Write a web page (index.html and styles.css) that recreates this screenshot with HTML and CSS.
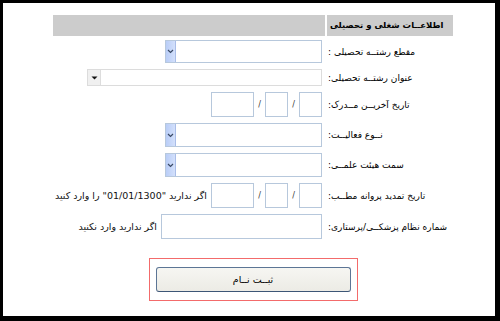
FILE: index.html
```html
<!DOCTYPE html>
<html lang="fa" dir="rtl">
	<head>
		<meta charset="UTF-8" />
		<meta name="viewport" content="width=device-width, initial-scale=1.0" />
		<title>اطلاعات شغلی و تحصیلی</title>

		<link rel="stylesheet" href="styles.css">
	</head>
	<body>
		<div class="frame">
			<form class="form">
				<div class="row head">
					<div class="label">اطلاعــات شغلی و تحصیلی</div>
					<div class="field"></div>
				</div>

				<div class="row">
					<div class="label">مقطع رشتــه تحصیلی :</div>
					<div class="field">
						<span class="combo blue w157 h23">
							<select></select>
							<span class="drop"><svg width="7" height="5" viewBox="0 0 7 5"><path d="M1 1l2.5 2.5L6 1" fill="none" stroke="#3a4a66" stroke-width="1.2"/></svg></span>
						</span>
					</div>
				</div>

				<div class="row">
					<div class="label">عنوان رشتــه تحصیلی:</div>
					<div class="field">
						<span class="combo gray w235 h17">
							<select></select>
							<span class="drop"><svg width="7" height="4" viewBox="0 0 7 4"><path d="M0.5 0.5h6L3.5 3.5z" fill="#111"/></svg></span>
						</span>
					</div>
				</div>

				<div class="row">
					<div class="label">تاریخ آخریــن مــدرک:</div>
					<div class="field date">
						<input class="box day" type="text" />
						<span class="slash">/</span>
						<input class="box day" type="text" />
						<span class="slash">/</span>
						<input class="box year" type="text" />
					</div>
				</div>

				<div class="row">
					<div class="label">نــوع فعالیــت:</div>
					<div class="field">
						<span class="combo blue w157 h24">
							<select></select>
							<span class="drop"><svg width="7" height="5" viewBox="0 0 7 5"><path d="M1 1l2.5 2.5L6 1" fill="none" stroke="#3a4a66" stroke-width="1.2"/></svg></span>
						</span>
					</div>
				</div>

				<div class="row">
					<div class="label">سمت هیئت علمــی:</div>
					<div class="field">
						<span class="combo blue w157 h24">
							<select></select>
							<span class="drop"><svg width="7" height="5" viewBox="0 0 7 5"><path d="M1 1l2.5 2.5L6 1" fill="none" stroke="#3a4a66" stroke-width="1.2"/></svg></span>
						</span>
					</div>
				</div>

				<div class="row">
					<div class="label">تاریخ تمدید پروانه مطــب:</div>
					<div class="field date">
						<input class="box day" type="text" />
						<span class="slash">/</span>
						<input class="box day" type="text" />
						<span class="slash">/</span>
						<input class="box year" type="text" />
						<span class="hint">اگر ندارید "01/01/1300" را وارد کنید</span>
					</div>
				</div>

				<div class="row">
					<div class="label">شماره نظام پزشکــی/پرستاری:</div>
					<div class="field">
						<input class="box wide" type="text" />
						<span class="hint">اگر ندارید وارد نکنید</span>
					</div>
				</div>

				<div class="submit">
					<div class="outline">
						<button type="button" class="btn">ثبــت نــام</button>
					</div>
				</div>
			</form>
		</div>
	</body>
</html>
```

FILE: styles.css
```css
* {
	padding: 0;
	margin: 0;
	box-sizing: border-box;
}

body {
	background: #fff;
	font-family: "DejaVu Sans", "Noto Sans", sans-serif;
	font-size: 9px;
	color: #000;
}

.frame {
	width: 500px;
	height: 321px;
	border-style: solid;
	border-color: #000;
	border-width: 3px 5px 5px 3px;
	background: #fff;
	overflow: hidden;
}

.form {
	width: 400px;
	margin: 12px auto 0 50px;
}

.row {
	display: grid;
	grid-template-columns: 126px 272px;
	column-gap: 2px;
	align-items: center;
	padding: 3px 0;
}
.row.head {
	padding: 0;
	height: 21px;
	margin-bottom: 1px;
}
.row.head > div {
	height: 21px;
	background: #cccccc;
}
.row.head .label {
	font-weight: bold;
	font-size: 8.5px;
	line-height: 21px;
	padding-left: 3px;
}

.label {
	text-align: left;
	padding-left: 1px;
	white-space: nowrap;
	overflow: hidden;
}

.field {
	display: flex;
	align-items: center;
	padding-right: 3px;
}

.combo {
	position: relative;
	display: inline-block;
	flex-shrink: 0;
}
.combo select {
	appearance: none;
	-webkit-appearance: none;
	display: block;
	width: 100%;
	height: 100%;
	background: #fff;
	border: 1px solid #b7c8dc;
	outline: none;
}
.combo.gray select {
	border-color: #dcdcdc;
}
.combo .drop {
	position: absolute;
	left: 1px;
	top: 1px;
	bottom: 1px;
	width: 10px;
	display: flex;
	align-items: center;
	justify-content: center;
}
.combo.blue .drop {
	background: linear-gradient(to right, #b9cdf7, #d3e0fb);
	border-right: 1px solid #a9bde8;
}
.combo.gray .drop {
	width: 13px;
	background: #f0f0f0;
	border-right: 1px solid #dddddd;
}

.w157 { width: 157px; }
.w235 { width: 235px; }
.h23 { height: 23px; }
.h17 { height: 17px; }
.h24 { height: 24px; }

.box {
	display: block;
	flex-shrink: 0;
	height: 25px;
	border: 1px solid #b7c8dc;
	background: #fff;
	outline: none;
}
.box.day {
	width: 23px;
}
.box.year {
	width: 43px;
}
.box.wide {
	width: 161px;
}

.slash {
	flex-shrink: 0;
	width: 11px;
	text-align: center;
	font-size: 8px;
	color: #333;
}

.hint {
	margin-right: 4px;
	white-space: nowrap;
	font-size: 9.5px;
	color: #111;
}

.submit {
	display: flex;
	justify-content: center;
	margin-top: 16px;
}
.outline {
	border: 1px solid #f36b6b;
	padding: 8px 6px;
}
.btn {
	display: block;
	width: 195px;
	height: 25px;
	font-family: inherit;
	font-size: 9.5px;
	color: #000;
	background: linear-gradient(#f6f6f2, #ecebe5);
	border: 1px solid #5c7595;
	border-bottom-color: #3d5676;
	border-radius: 3px;
}
```
